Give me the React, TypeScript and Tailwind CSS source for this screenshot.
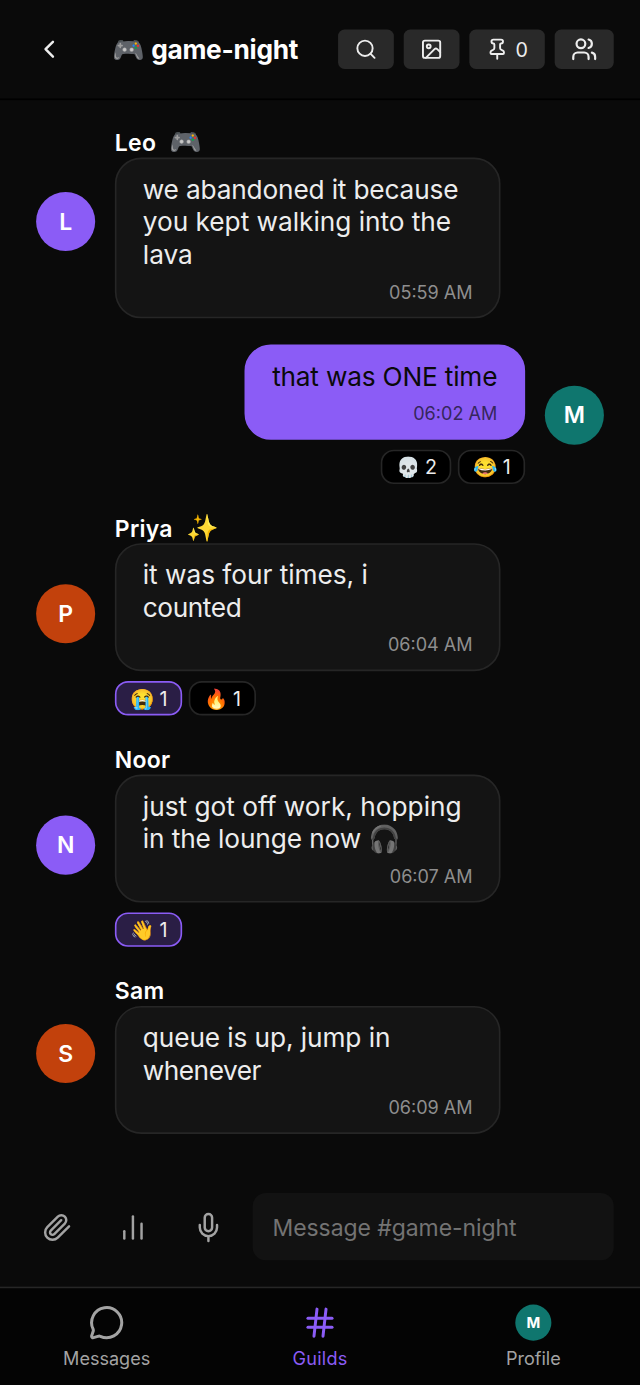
import type { ReactNode } from 'react';
import {
  ChartNoAxesColumn,
  ChevronLeft,
  Hash,
  Image,
  MessageCircle,
  Pin,
  Search,
  Users,
} from 'lucide-react';

type Reaction = { emoji: string; count: number; mine?: boolean };

type Line = { text: string; tracking?: string };

type Message = {
  name?: string;
  badge?: string;
  initial: string;
  color: string;
  lines: Line[];
  time: string;
  own?: boolean;
  reactions?: Reaction[];
};

const messages: Message[] = [
  {
    name: 'Leo',
    badge: '🎮',
    initial: 'L',
    color: 'bg-[#8b5cf6]',
    lines: [
      { text: 'we abandoned it because', tracking: 'tracking-[-0.106px]' },
      { text: 'you kept walking into the', tracking: 'tracking-[-0.02px]' },
      { text: 'lava' },
    ],
    time: '05:59 AM',
  },
  {
    initial: 'M',
    color: 'bg-[#0f766e]',
    lines: [{ text: 'that was ONE time', tracking: 'tracking-[-0.125px]' }],
    time: '06:02 AM',
    own: true,
    reactions: [
      { emoji: '💀', count: 2 },
      { emoji: '😂', count: 1 },
    ],
  },
  {
    name: 'Priya',
    badge: '✨',
    initial: 'P',
    color: 'bg-[#c2410c]',
    lines: [
      { text: 'it was four times, i', tracking: 'tracking-[-0.02px]' },
      { text: 'counted', tracking: 'tracking-[-0.26px]' },
    ],
    time: '06:04 AM',
    reactions: [
      { emoji: '😭', count: 1, mine: true },
      { emoji: '🔥', count: 1 },
    ],
  },
  {
    name: 'Noor',
    initial: 'N',
    color: 'bg-[#8b5cf6]',
    lines: [
      { text: 'just got off work, hopping' },
      { text: 'in the lounge now 🎧', tracking: 'tracking-[-0.07px]' },
    ],
    time: '06:07 AM',
    reactions: [{ emoji: '👋', count: 1, mine: true }],
  },
  {
    name: 'Sam',
    initial: 'S',
    color: 'bg-[#c2410c]',
    lines: [
      { text: 'queue is up, jump in', tracking: 'tracking-[-0.06px]' },
      { text: 'whenever', tracking: 'tracking-[-0.3px]' },
    ],
    time: '06:09 AM',
  },
];

function StrokeIcon({ children }: { children: ReactNode }) {
  return (
    <svg
      viewBox="0 0 24 24"
      className="size-[18px] shrink-0 overflow-visible"
      fill="none"
      stroke="currentColor"
      strokeWidth={2}
      strokeLinecap="round"
      strokeLinejoin="round"
    >
      {children}
    </svg>
  );
}

function HeaderButton({ className, label, children }: { className: string; label: string; children: ReactNode }) {
  return (
    <button
      aria-label={label}
      className={`flex h-6 items-center justify-center rounded-sm bg-[#292929] text-[#ededed] ${className}`}
    >
      {children}
    </button>
  );
}

function ReactionPill({ emoji, count, mine }: Reaction) {
  return (
    <span
      className={`flex h-[21px] items-center gap-[2.6px] rounded-lg border pr-[7.8px] pl-[8.6px] text-xs leading-[19px] text-[#ededed] ${
        mine ? 'border-[#8b5cf6] bg-[#2a1e45]' : 'border-[#262626] bg-black'
      }`}
    >
      <span>{emoji}</span>
      <span>{count}</span>
    </span>
  );
}

function MessageRow({ message }: { message: Message }) {
  const { own } = message;
  return (
    <div className={`flex items-center gap-3 ${own ? 'flex-row-reverse' : ''}`}>
      <div
        className={`flex size-9 shrink-0 items-center justify-center rounded-full text-sm font-semibold text-white ${message.color}`}
      >
        {message.initial}
      </div>
      <div className={`flex flex-col ${own ? 'items-end' : 'items-start'}`}>
        {message.name && (
          <div className="flex h-5 items-center gap-2 pt-px text-sm leading-5 text-white">
            <span className="font-semibold tracking-[0.15px]">{message.name}</span>
            {message.badge && <span className="pb-[1.6px] text-base leading-[18px]">{message.badge}</span>}
          </div>
        )}
        <div
          className={`rounded-2xl border px-4 pt-[8.2px] pb-[6.8px] ${
            own ? 'border-[#8b5cf6] bg-[#8b5cf6] text-[#0a0a0a]' : 'w-[235px] border-[#262626] bg-[#141414] text-[#ededed]'
          }`}
        >
          <div className="text-base leading-5 whitespace-nowrap">
            {message.lines.map(({ text, tracking }) => (
              <div key={text} className={`h-5 ${tracking ?? ''}`}>{text}</div>
            ))}
          </div>
          <div className={`mt-[4.8px] mb-[0.2px] text-right text-[11px] leading-4 ${own ? 'text-[#36265d]' : 'text-[#8e8e8e]'}`}>
            {message.time}
          </div>
        </div>
        {message.reactions && (
          <div className="mt-1.5 flex gap-1">
            {message.reactions.map((r) => (
              <ReactionPill key={r.emoji} {...r} />
            ))}
          </div>
        )}
      </div>
    </div>
  );
}

export default function App() {
  return (
    <div className="h-[1385px] w-[640px] overflow-hidden bg-[#0a0a0a]">
      <div className="flex h-[844px] w-[390px] origin-top-left scale-[1.64103] flex-col overflow-hidden bg-[#0a0a0a] font-['Inter','Noto_Color_Emoji',sans-serif] text-[#ededed]">
        <header className="flex h-[61px] shrink-0 items-center border-b border-black pr-4 pl-[21px]">
          <button aria-label="Back" className="flex w-[18px] justify-center">
            <ChevronLeft size={18} strokeWidth={2} />
          </button>
          <h1 className="ml-[29.2px] flex items-center gap-1 pt-[0.6px] text-base font-bold whitespace-nowrap text-white">
            <span>🎮</span>
            <span className="tracking-[-0.17px]">game-night</span>
          </h1>
          <div className="ml-auto flex gap-1.5">
            <HeaderButton label="Search" className="w-[34px]">
              <Search size={14} />
            </HeaderButton>
            <HeaderButton label="Media" className="w-[34px]">
              <Image size={14} />
            </HeaderButton>
            <HeaderButton label="Pins" className="w-[46px] gap-1 text-xs">
              <Pin size={14} />
              <span className="pt-px">0</span>
            </HeaderButton>
            <HeaderButton label="Members" className="w-9">
              <Users size={16} />
            </HeaderButton>
          </div>
        </header>

        <main className="flex min-h-0 flex-1 flex-col gap-4 px-[22px] pt-[15.2px]">
          {messages.map((m) => (
            <MessageRow key={m.time} message={m} />
          ))}
        </main>

        <div className="flex h-[57px] shrink-0 items-start pr-4 pl-[26.4px] text-[#a3a3a3]">
          <div className="flex h-[41px] w-[127.2px] items-center gap-7">
            <StrokeIcon>
              <path d="m21.44 11.05-9.19 9.19a6 6 0 0 1-8.49-8.49l8.57-8.57A4 4 0 1 1 18 8.84l-8.59 8.57a2 2 0 0 1-2.83-2.83l8.49-8.48" />
            </StrokeIcon>
            <ChartNoAxesColumn size={18} className="shrink-0" />
            <StrokeIcon>
              <path d="M12 1a3 3 0 0 0-3 3v8a3 3 0 0 0 6 0V4a3 3 0 0 0-3-3Z" />
              <path d="M19 10v2a7 7 0 0 1-14 0v-2" />
              <path d="M12 19v4" />
            </StrokeIcon>
          </div>
          <div className="flex h-[41px] flex-1 items-center rounded-lg bg-[#121212] px-[12.5px] text-sm tracking-[-0.04px] text-[#737373]">
            Message #game-night
          </div>
        </div>

        <nav className="grid h-[60px] shrink-0 grid-cols-3 border-t border-[#262626] bg-[#040404] pt-2.5 text-[11px] leading-4 text-[#a3a3a3]">
          <div className="flex flex-col items-center gap-[3.4px]">
            <MessageCircle size={22} />
            <span>Messages</span>
          </div>
          <div className="flex flex-col items-center gap-[3.4px] text-[#8b5cf6]">
            <Hash size={22} />
            <span className="tracking-[0.15px]">Guilds</span>
          </div>
          <div className="flex flex-col items-center gap-[3.4px]">
            <span className="flex size-[22px] items-center justify-center rounded-full bg-[#0f766e] text-[9px] font-bold text-white">
              M
            </span>
            <span>Profile</span>
          </div>
        </nav>
      </div>
    </div>
  );
}
